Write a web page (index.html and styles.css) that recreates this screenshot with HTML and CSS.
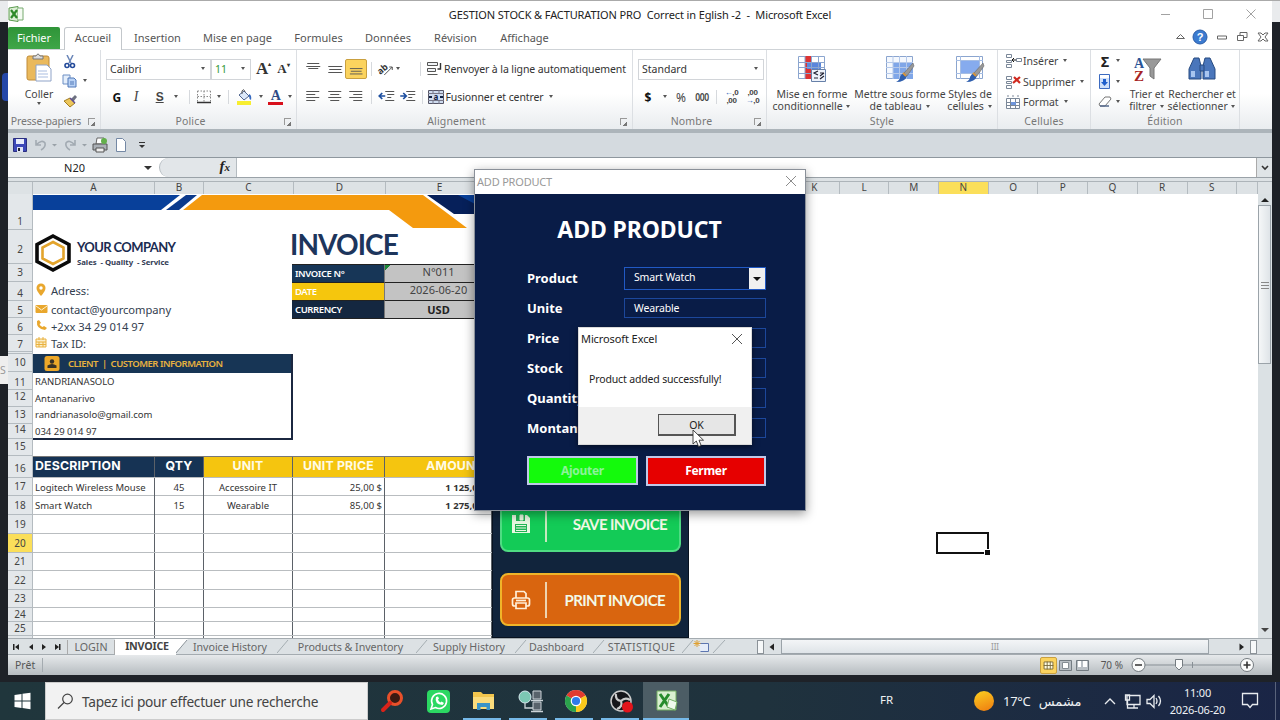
FILE: index.html
```
<!DOCTYPE html>
<html lang="fr">
<head>
    <meta charset="UTF-8">
    <title>GESTION STOCK &amp; FACTURATION PRO</title>
    <link rel="stylesheet" href="styles.css">
</head>
<body>
<div class="desktop">
    <div class="behind-top"></div>
    <div class="behind-blue"></div>
    <div class="behind-s">S</div>

    <!-- excel window -->
    <div class="excel">
        <div class="titlebar">
            <svg class="xl-logo" width="16" height="16" viewBox="0 0 16 16"><path d="M1 2l9-1.500v15L1 14z" fill="#dff0d8" stroke="#5a9a4e"/><path d="M10 2h5v12h-5" fill="#f4faf2" stroke="#77aa6e"/><path d="M3 4l6 8M9 4l-6 8" stroke="#2f8a2a" stroke-width="2.200"/></svg>
            <span class="title">GESTION STOCK &amp; FACTURATION PRO&nbsp; Correct in Eglish -2&nbsp; -&nbsp; Microsoft Excel</span>
            <svg class="win-btns" width="104" height="14" viewBox="0 0 104 14" fill="none" stroke="#a2a2a2"><path d="M5 7.500h9M47.500 2.500h9v9h-9zM90.500 2.500l9 9M99.500 2.500l-9 9"/></svg>
        </div>

        <div class="tabs">
            <span class="tab-file">Fichier</span>
            <span class="tab-active">Accueil</span>
            <span class="tab t1">Insertion</span>
            <span class="tab t2">Mise en page</span>
            <span class="tab t3">Formules</span>
            <span class="tab t4">Données</span>
            <span class="tab t5">Révision</span>
            <span class="tab t6">Affichage</span>
            <svg class="mdi" width="98" height="18" viewBox="0 0 98 18" fill="none" stroke="#666">
                <path d="M4.500 10.500l4-4 4 4zM45.500 8h9v3h-9zM65.500 7.500h6v5h-6zM68 7V4.500h7v5h-3M86 5h3l2 2 2-2h3l-3 4 3 4h-3l-2-2-2 2h-3l3-4z"/>
                <circle cx="28" cy="9" r="7" fill="#3b7bd0" stroke="#2a5da8"/>
                <text x="28" y="13" text-anchor="middle" font-size="11" font-weight="bold" fill="#fff" stroke="none">?</text>
            </svg>
        </div>

        <div class="ribbon">
            <div class="group g-clip">
                <div class="clip">
                    <div class="big paste">
                        <svg width="30" height="30" viewBox="0 0 30 30"><rect x="3" y="3" width="22" height="24" rx="2" fill="#eab95c" stroke="#c08c3a"/><path d="M9 5V3h3q2-4 4 0h3v3H9z" fill="#ddd" stroke="#777"/><path d="M12 12h11l4 4v12H12z" fill="#fff" stroke="#8fa3c8"/><path d="M14 18h9M14 21h10M14 24h10" stroke="#a9bde0"/></svg>
                        <span>Coller</span><i class="caret"></i>
                    </div>
                    <div class="clip-small">
                        <svg width="16" height="14" viewBox="0 0 16 14" fill="none"><path d="M5 0l4 8M11 0L7 8" stroke="#6a86b8" stroke-width="1.500"/><circle cx="5" cy="10.500" r="2" stroke="#234a9a" stroke-width="1.600"/><circle cx="10.500" cy="10.500" r="2" stroke="#234a9a" stroke-width="1.600"/></svg>
                        <span class="line"><svg width="16" height="14" viewBox="0 0 16 14"><path d="M1 1h7v9H1z" fill="#e4eefb" stroke="#6d8fc4"/><path d="M6 4h6l2 2v7H6z" fill="#b9d2f5" stroke="#5078b8"/><path d="M8 8h4M8 10h4" stroke="#5078b8"/></svg><i class="caret"></i></span>
                        <svg width="16" height="14" viewBox="0 0 16 14"><path d="M9 5l4-4 2 2-4 5z" fill="#6c7080"/><path d="M2 7l6-3 5 5-5 4z" fill="#ecc65a" stroke="#a37d22"/><path d="M8 4l5 5" stroke="#5b4b92" stroke-width="1.500"/></svg>
                    </div>
                </div>
                <div class="cap"><span>Presse-papiers</span><i class="launch"></i></div>
            </div>

            <div class="group g-font">
                <div class="row1">
                    <span class="combo c-font"><em>Calibri</em><i class="caret"></i></span>
                    <span class="combo c-size"><em>11</em><i class="caret"></i></span>
                    <span class="serif big-a">A<sup>▴</sup></span>
                    <span class="serif small-a">A<sup>▾</sup></span>
                </div>
                <div class="row2">
                    <b class="w20">G</b><span class="w20 ital">I</span><span class="w22 under">S</span><i class="caret"></i><i class="sep"></i>
                    <svg class="ic-border" width="16" height="14" viewBox="0 0 16 14"><path d="M1.500 1h13M1.500 6.500h13M1.500 1v11M8 1v11M14.500 1v11" fill="none" stroke="#888" stroke-dasharray="1.500 1.500"/><path d="M1 12.500h14" stroke="#333" stroke-width="1.500"/></svg>
                    <i class="caret"></i><i class="sep sep2"></i>
                    <svg class="ic-fill" width="18" height="16" viewBox="0 0 18 16"><path d="M3 6l5-4 5 5-5 4z" fill="#dce8f8" stroke="#50658f"/><path d="M6 5V2q2-3 3 1" fill="none" stroke="#555"/><path d="M13 5q3 1 2 6-2-1-2-4" fill="#3468c0"/><path d="M1 12h14v4H1z" fill="#f8ee30"/></svg>
                    <i class="caret"></i>
                    <span class="font-color">A</span><i class="caret"></i>
                </div>
                <div class="cap"><span>Police</span><i class="launch"></i></div>
            </div>

            <div class="group g-align">
                <div class="row1">
                    <svg class="al" viewBox="0 0 21 20"><path d="M5 4.500h12M4 7.500h14M6 9.500h10"/></svg>
                    <svg class="al" viewBox="0 0 21 20"><path d="M4 7.500h14M5 10.500h12M4 13.500h14"/></svg>
                    <svg class="al on" viewBox="0 0 21 20"><path d="M4 9.500h14M5 12.500h12M4 15.500h14"/></svg>
                    <i class="sep"></i>
                    <svg class="al" viewBox="0 0 21 20"><text x="1" y="12" font-size="9" font-weight="bold" fill="#333" stroke="none" transform="rotate(-40 8 10)">ab</text><path d="M8 16l8-8M13 8h3v3"/></svg><i class="caret c-or"></i>
                    <i class="sep sep-wrap"></i>
                    <svg width="16" height="16" viewBox="0 0 16 16" fill="#f0f3f6" stroke="#555"><path d="M1.500 1.500h10v3h-10zM1.500 7.500h8v3h-8zM1.500 13.500h10"/><path d="M14.500 2v6h-3" fill="none" stroke="#333" stroke-width="1.400"/></svg>
                    <span class="txt wrap-t">Renvoyer à la ligne automatiquement</span>
                </div>
                <div class="row2">
                    <svg class="al" viewBox="0 0 21 20"><path d="M4 4.500h13M4 7.500h9M4 10.500h13M4 13.500h9"/></svg>
                    <svg class="al" viewBox="0 0 21 20"><path d="M4 4.500h13M6 7.500h9M4 10.500h13M6 13.500h9"/></svg>
                    <svg class="al" viewBox="0 0 21 20"><path d="M4 4.500h13M8 7.500h9M4 10.500h13M8 13.500h9"/></svg>
                    <i class="sep"></i>
                    <svg class="al" viewBox="0 0 21 20"><path d="M9 4.500h9M11 7.500h7M11 10.500h4M9 13.500h9"/><path d="M3 9h6M6 6L3 9l3 3" stroke="#1d4fa0" stroke-width="1.700"/></svg>
                    <svg class="al" viewBox="0 0 21 20"><path d="M9 4.500h9M11 7.500h7M11 10.500h4M9 13.500h9"/><path d="M3 9h6M6 6l3 3-3 3" stroke="#1d4fa0" stroke-width="1.700"/></svg>
                    <i class="sep sep-m"></i>
                    <svg width="16" height="14" viewBox="0 0 16 14"><path d="M.5.5h15v13H.5z" fill="#cfdcf0" stroke="#556"/><path d="M0 3.500h16M0 10.500h16M5 0v3M11 0v3M5 11v3M11 11v3" stroke="#778"/><path d="M1 7h3M12 7h3" stroke="#124" stroke-width="2"/><text x="8" y="10" text-anchor="middle" font-size="8" font-weight="bold" fill="#124">a</text></svg>
                    <span class="txt merge-t">Fusionner et centrer</span><i class="caret"></i>
                </div>
                <div class="cap"><span>Alignement</span><i class="launch"></i></div>
            </div>

            <div class="group g-num">
                <div class="row1"><span class="combo c-num"><em>Standard</em><i class="caret"></i></span></div>
                <div class="row2">
                    <b class="w20">$</b><i class="caret"></i><span class="w20 pct">%</span><span class="w22 zeros">000</span><i class="sep"></i>
                    <span class="dec"><span><u>←</u>,0</span><span>,00</span></span>
                    <span class="dec"><span>,00</span><span><u>→</u>,0</span></span>
                </div>
                <div class="cap"><span>Nombre</span><i class="launch"></i></div>
            </div>

            <div class="group g-style">
                <div class="bigs">
                    <div class="big b90">
                        <svg width="30" height="28" viewBox="0 0 30 28"><path d="M1.500 1.500h26v22h-26z" fill="#fff" stroke="#8ba5cf"/><path d="M8 1h6v23H8z" fill="#d33"/><path d="M10 8h14v6H10z" fill="#5a86dc"/><path d="M1 7.500h27M1 12.500h27M1 18.500h27M8 1v23M14.500 1v23M21.500 1v23" stroke="#8ba5cf"/><path d="M14.500 14.500h14v12h-14z" fill="#eef3fb" stroke="#6680a8"/><path d="M21 16l-4 2 4 2M17 23h4M23 18h4M23 21l4-3M23 24l4-3" fill="none" stroke="#223" stroke-width="1.200"/></svg>
                        <span>Mise en forme</span><span>conditionnelle <i class="caret"></i></span>
                    </div>
                    <div class="big b86">
                        <svg width="30" height="28" viewBox="0 0 30 28"><path d="M1.500 1.500h26v22h-26z" fill="#f4f8fe" stroke="#8ba5cf"/><path d="M8 7h20v17H8z" fill="#7fa6e8"/><path d="M1 7.500h27M1 12.500h27M1 18.500h27M8 1v23M14.500 1v23M21.500 1v23" stroke="#b5c9ea"/><path d="M28 8l-9 10 3 3 7-10z" fill="#999" stroke="#666" stroke-width=".6"/><path d="M19 18l3 3q-2 6-11 6 4-2 4-5 1-3 4-4z" fill="#2f5fae"/><path d="M18 18l3 3" stroke="#d8973c" stroke-width="2"/></svg>
                        <span>Mettre sous forme</span><span>de tableau <i class="caret"></i></span>
                    </div>
                    <div class="big b54">
                        <svg width="30" height="28" viewBox="0 0 30 28"><path d="M1.500 1.500h26v22h-26z" fill="#fff" stroke="#8ba5cf"/><path d="M6 6h18v12H6z" fill="#86abee"/><path d="M1 5.500h27M1 18.500h27M5.500 1v23M24.500 1v23" stroke="#a5bde4"/><path d="M28 8l-9 10 3 3 7-10z" fill="#999" stroke="#666" stroke-width=".6"/><path d="M19 18l3 3q-2 6-11 6 4-2 4-5 1-3 4-4z" fill="#2f5fae"/><path d="M18 18l3 3" stroke="#d8973c" stroke-width="2"/></svg>
                        <span>Styles de</span><span>cellules <i class="caret"></i></span>
                    </div>
                </div>
                <div class="cap"><span>Style</span></div>
            </div>

            <div class="group g-cells">
                <div class="stack">
                    <div class="line"><svg width="17" height="14" viewBox="0 0 17 14" fill="#fff" stroke="#7a8798"><path d="M1.500.5h5v3h-5zM1.500 6.500h5v2h-5zM1.500 10.500h5v3h-5zM11.500 4.500h5v3h-5z"/><path d="M11 6H7M9 4L7 6l2 2" stroke="#111" fill="none"/></svg><span>Insérer</span><i class="caret"></i></div>
                    <div class="line"><svg width="17" height="14" viewBox="0 0 17 14" fill="#fff" stroke="#7a8798"><path d="M1.500 1.500h5v3h-5zM1.500 6.500h5v2h-5zM1.500 10.500h5v3h-5z"/><path d="M9 2l6 6M15 2L8 8" stroke="#d02a20" stroke-width="2.200"/></svg><span>Supprimer</span><i class="caret"></i></div>
                    <div class="line"><svg width="17" height="14" viewBox="0 0 17 14" fill="#fff" stroke="#7a8798"><path d="M1.500 3.500h13v10h-13zM1 7.500h14M1 10.500h14M5.500 3v11M10.500 3v11M3 0v2M8 0v2M13 0v2"/><path d="M6 7h5v3H6z" fill="#6f96dc" stroke="none"/></svg><span>Format</span><i class="caret"></i></div>
                </div>
                <div class="cap"><span>Cellules</span></div>
            </div>

            <div class="group g-edit">
                <div class="bigs">
                    <div class="stack">
                        <div class="line"><b class="sigma">Σ</b><i class="caret"></i></div>
                        <div class="line"><svg width="16" height="15" viewBox="0 0 16 15"><path d="M2.500.5h10v14h-10z" fill="#cfe0fa" stroke="#3c6bc0"/><path d="M3 1h9v3H3z" fill="#fff"/><path d="M6 5h3v3h2l-3.500 4L4 8h2z" fill="#1f5fcc"/></svg><i class="caret"></i></div>
                        <div class="line"><svg width="16" height="14" viewBox="0 0 16 14"><path d="M2 9l6-7h5l1 2-6 7H3z" fill="#fff" stroke="#777"/><path d="M3 11h9" stroke="#55688c" stroke-width="1.500"/></svg><i class="caret"></i></div>
                    </div>
                    <div class="big b44">
                        <svg width="30" height="28" viewBox="0 0 30 28"><path d="M11 4h18l-7 9v11l-4-3v-8z" fill="#999" stroke="#777"/><text x="2" y="13" font-size="14" font-weight="bold" font-family="Liberation Serif" fill="#2b5597">A</text><text x="2" y="26" font-size="15" font-weight="bold" font-family="Liberation Serif" fill="#a82424">Z</text></svg>
                        <span>Trier et</span><span>filtrer <i class="caret"></i></span>
                    </div>
                    <div class="big b66">
                        <svg width="30" height="28" viewBox="0 0 30 28" fill="#4a76bb" stroke="#274a80"><path d="M7 3h5l2 8v13H2V14z"/><path d="M18 3h5l5 11v10H16V11z"/><path d="M13 10h4v6h-4z"/><path d="M4 16h4v6H4zM18 16h4v6h-4z" fill="#a8c5ef" stroke="none"/></svg>
                        <span>Rechercher et</span><span>sélectionner <i class="caret"></i></span>
                    </div>
                </div>
                <div class="cap"><span>Édition</span></div>
            </div>
        </div>

        <!-- quick access -->
        <div class="qat">
            <svg width="14" height="14" viewBox="0 0 14 14"><path d="M.5.5h13v13H.5z" fill="#3d48b8" stroke="#2b2f80"/><path d="M3 1h8v5H3z" fill="#e8ecfb"/><path d="M4 9h6v5H4z" fill="#dfe3f5"/><path d="M5 10h2v3H5z" fill="#223"/></svg>
            <svg width="26" height="12" viewBox="0 0 26 12" fill="none" stroke="#a2aab2" stroke-width="1.600"><path d="M2 1v5h5M2 6q6-6 9-2 1 4-4 7"/><path d="M18 5h5l-2.500 2.500z" fill="#99a1a8" stroke="none"/></svg>
            <svg width="26" height="12" viewBox="0 0 26 12" fill="none" stroke="#a2aab2" stroke-width="1.600"><path d="M11 1v5H6M11 6Q5 0 2 4q-1 4 4 7"/><path d="M18 5h5l-2.500 2.500z" fill="#99a1a8" stroke="none"/></svg>
            <svg width="16" height="16" viewBox="0 0 16 16"><path d="M4 7l1-6h7l1 6z" fill="#fff" stroke="#666"/><path d="M1 7h14v6H1z" fill="#aab0b6" stroke="#555"/><path d="M4 11h8v4H4z" fill="#eee" stroke="#555"/><circle cx="12" cy="4" r="3" fill="#63b04b"/></svg>
            <svg width="12" height="14" viewBox="0 0 12 14"><path d="M1.500.5h6l3 3v10h-9z" fill="#fff" stroke="#7488a4"/></svg>
            <svg width="8" height="8" viewBox="0 0 8 8"><path d="M1 1.500h6" stroke="#333"/><path d="M1 4h6L4 7z" fill="#333"/></svg>
        </div>

        <div class="formula">
            <span class="name-box">N20</span><i class="caret dark"></i>
            <span class="fx-zone"><em>f<small>x</small></em></span>
            <span class="fx-input"></span>
            <span class="fx-more"><svg width="8" height="6" viewBox="0 0 8 6"><path d="M1 1l3 3 3-3" fill="none" stroke="#333" stroke-width="1.600"/></svg></span>
        </div>

        <div class="sheet">
            <div class="cols">
                <span class="corner"></span>
                <span class="cA">A</span><span class="cB">B</span><span class="cC">C</span><span class="cD">D</span><span class="cE">E</span><span class="cF"></span>
                <span>K</span><span>L</span><span>M</span><span class="sel">N</span><span>O</span><span>P</span><span>Q</span><span>R</span><span>S</span><span class="last"></span>
            </div>
            <div class="body">
                <div class="rows">
                    <span class="r1">1</span><span class="r2">2</span><span class="r3">3</span><span class="r4">4</span><span class="r5">5</span><span class="r6">6</span><span class="r7">7</span><span class="r8"></span>
                    <span class="r10">10</span><span class="r11">11</span><span class="r12">12</span><span class="r13">13</span><span class="r14">14</span><span class="r15">15</span><span class="r16">16</span>
                    <span>17</span><span>18</span><span>19</span><span class="sel">20</span><span>21</span><span>22</span><span class="r23">23</span><span class="r24">24</span><span class="r25">25</span>
                </div>

                <div class="invoice">
                    <svg class="banner" width="459" height="36" viewBox="0 0 459 36">
                        <path d="M0 1h147L128 16H0z" fill="#08409a"/><path d="M153 1h11l-18 15h-13z" fill="#0b3a8c"/>
                        <path d="M169 1h221l44 33h-54L356 16H150z" fill="#f49a0e"/><path d="M394 1h65v19h-38z" fill="#06205a"/><path d="M425 1h34v18z" fill="#08409a"/>
                    </svg>
                    <div class="head">
                        <div class="company">
                            <div class="brand">
                                <svg width="38" height="40" viewBox="0 0 38 40" fill="none"><path d="M19 3l16 8.500v17L19 37 3 28.500v-17z" stroke="#0a0a0a" stroke-width="3.600"/><path d="M19 9l10.500 5.500v11L19 31 8.500 25.500v-11z" stroke="#e3a42c" stroke-width="2.600"/></svg>
                                <div><strong>YOUR COMPANY</strong><small>Sales&nbsp; - Quality&nbsp; - Service</small></div>
                            </div>
                            <p class="p1"><svg width="14" height="14" viewBox="0 0 14 14"><path d="M7 13Q2.500 8 2.500 5a4.500 4.500 0 019 0q0 3-4.500 8z" fill="#e9a72d"/><circle cx="7" cy="5" r="1.700" fill="#fff"/></svg>Adress:</p>
                            <p class="p2"><svg width="14" height="14" viewBox="0 0 14 14"><rect x="1.500" y="2" width="12" height="8" rx="1" fill="#e9a72d"/><path d="M2 3l5.500 4L13 3" fill="none" stroke="#fff3cf"/></svg>contact@yourcompany</p>
                            <p class="p3"><svg width="14" height="14" viewBox="0 0 14 14"><path d="M3 2q-1 8 8 9l2-2-3-2-1.500 1Q6 7 5.500 5L7 4 5 1z" fill="#e9a72d"/></svg>+2xx 34 29 014 97</p>
                            <p class="p4"><svg width="14" height="14" viewBox="0 0 14 14"><path d="M2 3h10v8H2zM2 6h10M5 1v3M9 1v3M5 6v5M9 6v5M2 8.500h10" fill="#fbeec8" stroke="#e9b13e"/></svg>Tax ID:</p>
                        </div>
                        <div class="meta">
                            <h1>INVOICE</h1>
                            <div class="meta-grid">
                                <b class="m1">INVOICE N°</b><span class="m1v">N°011</span>
                                <b class="m2">DATE</b><span>2026-06-20</span>
                                <b class="m3">CURRENCY</b><span class="usd">USD</span>
                            </div>
                        </div>
                    </div>
                    <div class="client">
                        <div class="client-head"><svg width="16" height="15" viewBox="0 0 16 15"><rect x=".5" width="15" height="15" rx="2.500" fill="#eda829"/><circle cx="8" cy="5.500" r="2.200" fill="#3a3226"/><path d="M3.500 12V9.500Q8 6.500 12.500 9.500V12z" fill="#3a3226"/></svg><span>CLIENT&nbsp; |&nbsp; CUSTOMER INFORMATION</span></div>
                        <p>RANDRIANASOLO</p><p>Antananarivo</p><p>randrianasolo@gmail.com</p><p>034 29 014 97</p>
                    </div>
                    <div class="lines">
                        <div class="tr th"><b class="navy left">DESCRIPTION</b><b class="navy">QTY</b><b>UNIT</b><b>UNIT PRICE</b><b class="right">AMOUNT</b></div>
                        <div class="tr"><span class="left">Logitech Wireless Mouse</span><span>45</span><span>Accessoire IT</span><span class="right">25,00 $</span><span class="right total">1 125,00 $</span></div>
                        <div class="tr"><span class="left">Smart Watch</span><span>15</span><span>Wearable</span><span class="right">85,00 $</span><span class="right total">1 275,00 $</span></div>
                        <div class="tr"><span></span><span></span><span></span><span></span><span></span></div>
                        <div class="tr"><span></span><span></span><span></span><span></span><span></span></div>
                        <div class="tr"><span></span><span></span><span></span><span></span><span></span></div>
                        <div class="tr"><span></span><span></span><span></span><span></span><span></span></div>
                        <div class="tr h23"><span></span><span></span><span></span><span></span><span></span></div>
                        <div class="tr h24"><span></span><span></span><span></span><span></span><span></span></div>
                        <div class="tr h24"><span></span><span></span><span></span><span></span><span></span></div>
                        <div class="tr h26"><span></span><span></span><span></span><span></span><span></span></div>
                    </div>
                </div>

                <div class="actions">
                    <div class="act save"><svg width="20" height="20" viewBox="0 0 20 20"><path d="M1 1h15l3 3v15H1z" fill="#e8f8e2"/><path d="M5 1h9v6H5zM4 10h12v8H4z" fill="#22b455"/><path d="M9 1h3v5H9zM5 11.500h10M5 14h10M5 16.500h10" fill="#e8f8e2" stroke="#e8f8e2"/></svg><i></i><span>SAVE INVOICE</span></div>
                    <div class="act print"><svg width="20" height="20" viewBox="0 0 20 20" fill="none" stroke="#fff0d8" stroke-width="1.700"><path d="M5 8V1.500h8l2 2V8"/><rect x="1.500" y="8" width="17" height="8" rx="2"/><path d="M5 13h10v5.500H5z" fill="#d9650f"/><path d="M5 10.500h10"/></svg><i></i><span>PRINT INVOICE</span></div>
                </div>
                <div class="empty"><div class="cursor-cell"></div></div>

                <div class="vscroll"><i class="up"></i><div class="vthumb"></div><i class="down"></i></div>
            </div>
        </div>

        <div class="sheet-tabs">
            <svg class="nav" width="59" height="16" viewBox="0 0 59 16" fill="#222"><path d="M5 5h1.500v6H5zM11 5v6L7 8zM25 5v6l-4-3zM34 5v6l4-3zM47 5v6l4-3zM51 5h1.500v6H51z"/></svg>
            <span class="st s1">LOGIN</span>
            <span class="st s2">INVOICE</span>
            <svg width="12" height="16" viewBox="0 0 12 16"><path d="M0 0h12L0 13z" fill="#fff"/><path d="M11 1L0 14" stroke="#8d959b"/></svg>
            <span class="st s3">Invoice History</span>
            <svg width="12" height="16" viewBox="0 0 12 16"><path d="M11 1L0 14" stroke="#a5adb2"/></svg>
            <span class="st s4">Products &amp; Inventory</span>
            <svg width="12" height="16" viewBox="0 0 12 16"><path d="M11 1L0 14" stroke="#a5adb2"/></svg>
            <span class="st s5">Supply History</span>
            <svg width="12" height="16" viewBox="0 0 12 16"><path d="M11 1L0 14" stroke="#a5adb2"/></svg>
            <span class="st s6">Dashboard</span>
            <svg width="12" height="16" viewBox="0 0 12 16"><path d="M11 1L0 14" stroke="#a5adb2"/></svg>
            <span class="st s7">STATISTIQUE</span>
            <svg class="new-tab" width="46" height="16" viewBox="0 0 46 16"><path d="M11 1L0 14M43 1L31 14" stroke="#a5adb2"/><path d="M16.500 4.500h10v8h-8" fill="#e5ecf8" stroke="#5d76b0"/><path d="M15 1v7M11.500 4.500h7M12.500 2l5 5M17.500 2l-5 5" stroke="#e0a030"/></svg>
            <i class="split"></i>
            <svg width="17" height="16" viewBox="0 0 17 16"><path d="M10 4.500v7L5.500 8z" fill="#222"/></svg>
            <div class="hthumb">III</div>
            <svg width="41" height="16" viewBox="0 0 41 16"><path d="M30.500 4.500v7L35 8z" fill="#222"/></svg>
            <i class="split"></i>
        </div>

        <div class="status">
            <span class="ready">Prêt</span>
            <div class="views">
                <svg class="on" width="17" height="17" viewBox="0 0 17 17"><path d="M3.500 4.500h10v8h-10zM3 8.500h11M7 4v9M10.500 4v9" fill="#fffbe0" stroke="#75663a"/></svg>
                <svg width="17" height="17" viewBox="0 0 17 17"><path d="M2.500 3.500h12v10h-12z" fill="#b9bfc4" stroke="#747c82"/><path d="M5.500 5.500h6v6h-6z" fill="#fff" stroke="#848c92"/></svg>
                <svg width="17" height="17" viewBox="0 0 17 17"><path d="M2.500 3.500h12v10h-12z" fill="#b9bfc4" stroke="#747c82"/><path d="M4 4h3v6H4zM9 4h4v6H9z" fill="#fff"/></svg>
            </div>
            <span class="zoom">70 %</span>
            <svg width="126" height="18" viewBox="0 0 126 18"><path d="M14 9h96" stroke="#878f95"/><path d="M62.500 6v6" stroke="#878f95"/><g fill="#fafbfb" stroke="#747b80"><circle cx="8.500" cy="9" r="6.500"/><circle cx="117" cy="9" r="6.500"/><path d="M45.500 3.500h7v7L49 14l-3.500-3.500z"/></g><path d="M5 9h7M113.500 9h7M117 5.500v7" stroke="#333" stroke-width="1.600"/></svg>
        </div>
    </div>

    <!-- userform -->
    <div class="form">
        <div class="form-title"><span>ADD PRODUCT</span><svg width="12" height="12" viewBox="0 0 12 12"><path d="M1 1l10 10M11 1L1 11" stroke="#8c8c8c"/></svg></div>
        <div class="form-body">
            <h2>ADD PRODUCT</h2>
            <div class="field"><label>Product</label><div class="inp sel">Smart Watch<b></b></div></div>
            <div class="field"><label>Unite</label><div class="inp">Wearable</div></div>
            <div class="field"><label>Price</label><div class="inp"></div></div>
            <div class="field"><label>Stock</label><div class="inp"></div></div>
            <div class="field"><label>Quantity</label><div class="inp"></div></div>
            <div class="field"><label>Montant</label><div class="inp"></div></div>
            <div class="btns"><span class="add">Ajouter</span><span class="close">Fermer</span></div>
        </div>
    </div>

    <div class="msgbox">
        <div class="msg-title"><span>Microsoft Excel</span><svg width="12" height="12" viewBox="0 0 12 12"><path d="M1 1l10 10M11 1L1 11" stroke="#555"/></svg></div>
        <div class="msg-text">Product added successfully!</div>
        <div class="msg-foot"><span>OK</span></div>
    </div>
    <svg class="pointer" width="13" height="19" viewBox="0 0 13 19"><path d="M1 1v14l3.300-3 2.200 5.500 2.600-1L7 11.200h4.500z" fill="#fff" stroke="#333" stroke-width=".9"/></svg>

    <div class="taskbar">
        <svg class="start" width="45" height="38" viewBox="0 0 45 38" fill="#fff"><path d="M14.500 13l7-1v6.500h-7zM22.500 11.800l8-1.100v7.800h-8zM14.500 19.500h7V26l-7-1zM22.500 19.500h8v7.700l-8-1.100z"/></svg>
        <div class="search"><svg width="17" height="17" viewBox="0 0 17 17"><circle cx="10.500" cy="6" r="4.800" fill="none" stroke="#444" stroke-width="1.200"/><path d="M7 9.500L1 15.500" stroke="#444" stroke-width="1.300"/></svg><span>Tapez ici pour effectuer une recherche</span></div>
        <div class="apps">
            <svg viewBox="0 0 46 38"><circle cx="28" cy="16" r="6.500" fill="#3b1a12" stroke="#e8502a" stroke-width="3"/><path d="M23 21l-7 7" stroke="#d8231a" stroke-width="4" stroke-linecap="round"/></svg>
            <svg viewBox="0 0 46 38"><rect x="14" y="8" width="23" height="23" rx="4" fill="#2bd862"/><path d="M18 27l1.500-4.500a7.500 7.500 0 113 3z" fill="none" stroke="#fff" stroke-width="1.600"/><path d="M23 15q-2 7 6.500 8l1.500-2-2.500-1.500-1 1q-2-1-2.500-3l1-1-1-2z" fill="#fff"/></svg>
            <svg class="run" viewBox="0 0 46 38"><path d="M14 10h8l2 2h11v15H14z" fill="#f3c64d"/><path d="M14 15h21v12H14z" fill="#fbdc7c"/><path d="M18 28v-7h13v7h-3.500v-3h-6v3z" fill="#3a94c8"/></svg>
            <svg class="run" viewBox="0 0 46 38"><circle cx="20" cy="15" r="6" fill="#7cc8b4" stroke="#d5e8ee"/><path d="M28 9h8v8h-8zM28 20h8v8h-8z" fill="#59636c" stroke="#ccd3d8"/><path d="M20 21v5h8M26 18.500h12M26 29.500h12" stroke="#ccd3d8" stroke-width="1.300" fill="none"/></svg>
            <svg class="run" viewBox="0 0 46 38"><g transform="translate(2)"><circle cx="23" cy="19" r="11" fill="#e0e0e0"/><path d="M23 19L13.470 13.500A11 11 0 0132.530 13.500z" fill="#e23b2e"/><path d="M23 19l9.530-5.500A11 11 0 0123 30z" fill="#fbc91b"/><path d="M23 19v11a11 11 0 01-9.530-16.500z" fill="#2ba24c"/><circle cx="23" cy="19" r="5.300" fill="#fff"/><circle cx="23" cy="19" r="4.100" fill="#2f7bea"/></g></svg>
            <svg class="run" viewBox="0 0 46 38"><g transform="translate(2)"><circle cx="22" cy="19" r="10" fill="#15161a" stroke="#ccc" stroke-width="1.500"/><path d="M22 19q-6-1-5-7M22 19q4-4 9-1M22 19q2 6-4 8" fill="none" stroke="#ccc" stroke-width="2.200"/><circle cx="28.500" cy="25" r="5.500" fill="#e3141b"/></g></svg>
            <svg class="run act-app" viewBox="0 0 46 38"><path d="M14 9h19v19H14z" fill="#d9efd0" stroke="#73ae63"/><path d="M17 12l9 13M26 12l-9 13" stroke="#278c2c" stroke-width="3"/><path d="M26 17l8 3-2 8-8-3z" fill="#f0f9ec" stroke="#73ae63"/></svg>
        </div>
        <span class="lang">FR</span>
        <i class="sun"></i>
        <span class="temp">17°C</span><span class="weather" dir="rtl">مشمس</span>
        <svg width="62" height="38" viewBox="0 0 62 38" fill="none" stroke="#e8ebef" stroke-width="1.300"><path d="M4 22l5-5 5 5M26 13.500h13v9H26zM30 26h7M33 23v3M24.500 13h4v5h-4zM26.500 18v8h4M46 17.500h3l4-4v12l-4-4h-3zM55 16q2 3 0 6M57.500 14q4 5 0 10"/></svg>
        <span class="clock"><span>11:00</span><span>2026-06-20</span></span>
        <svg class="notif" width="18" height="18" viewBox="0 0 18 18" fill="none" stroke="#e8ebef" stroke-width="1.300"><path d="M1.500 1.500h15v11h-5L9 15.500 6.500 12.500h-5z"/></svg>
        <i class="peek"></i>
    </div>
</div>
</body>
</html>
```
FILE: styles.css
```
*{margin: 0; padding: 0; box-sizing: border-box}
body{width: 1280px; height: 720px; overflow: hidden; font-family: "Noto Sans", "Open Sans", sans-serif; font-size: 10.5px; color: #444}
svg{display: block; flex: none}
i{font-style: normal; flex: none}
.desktop{position: relative; width: 1280px; height: 720px; padding: 1px 8px 0; background: #1e2228}

/* what peeks out behind the window */
.behind-top{position: absolute; left: 0; top: 0; width: 1280px; height: 22px; background: #e9ebed; border-top: 1px solid #aaa}
.behind-blue{position: absolute; left: 2px; top: 73px; width: 6px; height: 28px; background: #2447a8; border-radius: 4px 0 0 4px}
.behind-s{position: absolute; left: 0; top: 356px; width: 8px; height: 28px; background: #eee; color: #999; line-height: 28px}

.excel{position: relative; width: 1264px; height: 674px; background: #fff}
.titlebar{display: flex; align-items: center; height: 26px; font-size: 11px; color: #222}
.title{flex: 1; text-align: center; padding-left: 100px; letter-spacing: -.12px}
.win-btns{margin-right: 12px}

.tabs{display: flex; height: 23px; border-bottom: 1px solid #cfd3d7; line-height: 22px; font-size: 11px; color: #555; text-align: center}
.tab-file{width: 52px; background: linear-gradient(#2f9438, #3fa648); color: #fff; border-radius: 2px 2px 0 0}
.tab-active{width: 58px; height: 23px; margin-left: 4px; border: 1px solid #c3c7cb; border-bottom: 0; border-radius: 3px 3px 0 0; background: #fff; line-height: 20px}
.t1{width: 71px}
.t2{width: 89px}
.t3{width: 73px}
.t4{width: 66px}
.t5{width: 69px}
.t6{width: 69px}
.mdi{margin: 1px 2px 0 auto; font-family: "Liberation Sans", sans-serif}

/* ribbon */
.ribbon{display: flex; height: 83px; background: linear-gradient(#fff 55%, #e9ecef); border-bottom: 4px solid #acb4ba}
.group{display: flex; flex-direction: column; border-right: 1px solid #dcdfe3; letter-spacing: 0}
.g-clip{width: 93px}
.g-font{width: 196px}
.g-align{width: 336px}
.g-num{width: 134px}
.g-style{width: 231px}
.g-cells{width: 93px}
.g-edit{width: 149px}
.cap{display: flex; align-items: center; height: 16px; color: #777; margin-top: auto; white-space: nowrap; letter-spacing: .15px}
.cap span{flex: 1; text-align: center}
.g-clip .cap{letter-spacing: -.15px}
.launch{width: 16px; height: 7px}
.launch::before{content: ""; display: block; width: 6px; height: 6px; margin-left: 4px; border-left: 1px solid #999; border-top: 1px solid #999}
.launch::after{content: ""; display: block; width: 4px; height: 4px; margin: -3px 0 0 7px; background: linear-gradient(135deg, transparent 50%, #777 50%)}
.caret{display: inline-block; width: 14px; height: 4px}
.caret::before{content: ""; display: block; width: 0; margin: 0 auto; border: 2.5px solid transparent; border-top: 3px solid #555; border-bottom: 0}
.big .caret{width: 6px; vertical-align: 1px}
.dark::before{border-width: 4px 4px 0; border-top-color: #333}
.sep{width: 1px; height: 14px; background: #d6d9dd}
.row1, .row2{display: flex; align-items: center; flex: none; height: 26px; margin-top: 6px; padding-left: 5px}
.row2{margin-top: 2px}
.w20{width: 20px; text-align: center}
.w22{width: 22px; text-align: center}
.row2 b{color: #111; font-size: 12px}
.big{display: flex; flex-direction: column; align-items: center; line-height: 12px; white-space: nowrap}
.big svg{margin-bottom: 5px}
.bigs{display: flex; padding-top: 5px}
.b90{width: 90px}
.b86{width: 86px}
.b54{width: 54px}
.b44{width: 44px}
.b66{width: 66px}
.line{display: flex; align-items: center; height: 20.5px}

.clip{display: flex; padding-top: 3px}
.paste{width: 46px; margin-left: 8px}
.paste .caret{margin-top: 2px}
.clip-small{display: flex; flex-direction: column}
.clip-small > svg{margin: 2px 0}
.combo{display: flex; align-items: center; height: 21px; border: 1px solid #d2d5d9; background: #fff; color: #333}
.combo em{flex: 1; font-style: normal; padding-left: 3px}
.c-font{width: 105px}
.c-size{width: 40px; color: #393}
.c-num{width: 126px}
.serif{font-family: "Liberation Serif", serif; font-weight: bold; color: #333}
.serif sup{font-size: 6px; vertical-align: 8px; line-height: 0}
.big-a{font-size: 17px; margin-left: 5px}
.small-a{font-size: 13px; margin-left: 6px}
.small-a sup{vertical-align: 6px}
.ital{font: italic 14px "Liberation Serif", serif}
.under{font: bold 12px "Liberation Sans", sans-serif; text-decoration: underline}
.g-font .row2{padding-left: 6px}
.g-font .row2 .sep{margin-left: 7px}
.g-font .under{width: 24px; padding-left: 4px}
.ic-border{margin-left: 6px}
.g-font .row2 .sep2{margin-left: 3px}
.ic-fill{margin-left: 7px}
.font-color{width: 15px; margin-left: 1px; font: bold 14px/12px "Liberation Serif", serif; text-align: center; color: #2c4a86; border-bottom: 3px solid #d8101c}
.g-font .row2 .caret{width: 13px}
.al{width: 21.5px; height: 20px; fill: none; stroke: #555}
.on{background: #fbd35e; border: 1px solid #c9a040; border-radius: 2px}
.g-align .sep{margin: 0 4px}
.g-align .c-or{width: 8px; margin-left: -3px}
.g-align .sep-wrap{margin: 0 5px 0 18px}
.g-align .sep-m{margin: 0 5px 0 3px}
.txt{margin-left: 2px; white-space: nowrap; color: #333; letter-spacing: -.1px}
.pct{font-size: 12px}
.zeros{font-size: 10px; font-weight: 600; letter-spacing: -.4px; transform: scaleX(.85)}
.g-num .row2 .sep{margin: 0 4px 0 3px}
.g-num .row2 .caret{width: 13px}
.dec{display: flex; flex-direction: column; width: 21px; text-align: center; font: bold 8px/8px "Liberation Sans", sans-serif; color: #444; letter-spacing: -.4px}
.dec u{text-decoration: none; color: #2257b5}
.stack{display: flex; flex-direction: column; padding-top: 2px}
.g-cells .stack{padding: 1px 0 0 7px}
.g-cells .line span{margin-left: 1px}
.g-edit .stack{width: 34px; margin-top: -4px; padding: 0 0 0 6px}
.g-edit .stack svg, .sigma{width: 16px}
.sigma{font-size: 14px; text-align: center; color: #222}
.g-edit .stack .caret{width: 10px}
.g-edit .big{font-size: 10.4px}

.qat{display: flex; align-items: center; height: 25px; padding-left: 5px; gap: 7px; background: #d4dadf; border-bottom: 1px solid #8e979e}
.qat svg:nth-child(2){margin-right: -3px}
.qat svg:nth-child(3){margin-right: -5px}
.qat svg:last-child{margin-left: 4px}
.formula{display: flex; align-items: center; height: 20px; border-bottom: 1px solid #9aa2a8; background: #fff; color: #222}
.name-box{width: 133px; text-align: center; font-size: 11px}
.fx-zone{width: 78px; height: 19px; margin-left: 4px; padding-right: 6px; border: 1px solid #b4bbc0; border-width: 0 1px; border-radius: 10px 0 0 10px; background: #e2e6e9; text-align: right; font: italic bold 15px/17px "Liberation Serif", serif}
.fx-zone small{font-size: 11px}
.fx-input{flex: 1}
.fx-more{display: flex; align-items: center; justify-content: center; width: 16px; height: 19px; background: #dfe4e7; border-left: 1px solid #aaa}

/* sheet */
.sheet{height: 460px; padding-top: 3px; background: #dde2e5}
.cols{display: flex; height: 13px; border-top: 1px solid #adb4b9; color: #444; line-height: 11px; text-align: center; font-size: 10px}
.cols span{width: 49.7px; flex: none; border-right: 1px solid #b4bbc0}
.cols .corner{width: 25px}
.cols .cA{width: 122px}
.cols .cB{width: 49px}
.cols .cC{width: 90px}
.cols .cD{width: 92px}
.cols .cE{width: 108px}
.cols .cF{width: 296px}
.cols .last{width: 21px}
.cols .sel, .rows .sel{background: #fbdf5a}
.body{display: flex; height: 444px; background: #fff; overflow: hidden}
.rows{width: 25px; flex: none; background: #e3e7ea; border-right: 1px solid #b4bbc0; text-align: center; font-size: 10px}
.rows span{display: flex; align-items: flex-end; justify-content: center; height: 18.75px; border-bottom: 1px solid #b4bbc0; line-height: 17px}
.rows .r1{height: 36px; line-height: 15px}
.rows .r2{height: 34px; line-height: 28px}
.rows .r3{height: 18px}
.rows .r4{height: 19px; line-height: 14px}
.rows .r5{height: 16.5px; line-height: 13px}
.rows .r6{height: 17px; line-height: 14px}
.rows .r7{height: 17px; line-height: 14px}
.rows .r8{height: 2.5px}
.rows .r10, .rows .r11{height: 18px}
.rows .r11{line-height: 13px}
.rows .r12{height: 17px; line-height: 19px}
.rows .r13{height: 17px}
.rows .r14{height: 15px}
.rows .r15{height: 17px}
.rows .r16{height: 21.5px}
.rows .r23{height: 17.5px}
.rows .r24, .rows .r25{height: 14px; line-height: 13px}

.invoice{width: 459px; flex: none; color: #333}
.head{display: flex; height: 124px}
.company{width: 259px; font-size: 11.2px; color: #33404f}
.brand{display: flex; height: 49px; padding: 3px 0 0 1px}
.brand div{padding: 5px 0 0 5px}
.brand strong{display: block; font: bold 13px/18px Lato, sans-serif; color: #1b2c52; letter-spacing: -.6px}
.brand small{display: block; font: bold 7.8px/12px "Noto Sans", sans-serif; color: #333c55; letter-spacing: -.05px}
.company p{display: flex; align-items: center; height: 18px; white-space: nowrap; letter-spacing: -.05px}
.company p svg{margin-right: 3px; margin-left: 1px}
.company .p1{height: 22px}
.company .p2{height: 17px}
.company .p3{height: 16px}
.company .p4{height: 18px}
.meta{width: 200px}
.meta h1{height: 34px; margin-left: -2px; font: bold 28px/28px Lato, sans-serif; color: #1d355c; letter-spacing: -.9px}
.meta-grid{display: grid; grid-template-columns: 92px 108px; grid-template-rows: 18px 18px 18px; border-bottom: 1px solid #222}
.meta-grid b, .meta-grid span{border-top: 1px solid #222; padding-left: 3px; font-size: 9.5px; line-height: 17px; font-weight: 600; color: #fff}
.meta-grid b{letter-spacing: -.4px}
.meta-grid span{background: #c3c3c3; border-left: 1px solid #777; text-align: center; padding: 0; color: #444; font-size: 11px; line-height: 13px; font-weight: 400}
.meta-grid .m1{background: #173657}
.meta-grid .m1v{background: linear-gradient(135deg, #1d8a3a 4px, #c3c3c3 4px)}
.meta-grid .m2{background: #f5c60d}
.meta-grid .m3{background: #142740}
.meta-grid .usd{font-weight: bold; color: #222; line-height: 18px}
.client{width: 260px; height: 86px; border: 1px solid #1b2740; border-width: 0 2px 2px 0; font-size: 9.5px}
.client-head{display: flex; align-items: center; gap: 8px; height: 19px; padding-left: 11px; background: #173555; color: #e8b23f; font-weight: 600}
.client-head span{letter-spacing: -.5px}
.client p{height: 16.5px; line-height: 17px; padding-left: 2px}
.lines{margin-top: 16px}
.tr{display: grid; grid-template-columns: 122px 49px 89px 92px 107px; height: 18.75px; border-bottom: 1px solid #b9bdc0; font-size: 9.5px; line-height: 19px; text-align: center}
.tr span, .tr b{border-right: 1px solid #5b6168; white-space: nowrap}
.tr .left{text-align: left; padding-left: 2px}
.tr .right{text-align: right; padding-right: 2px}
.tr .total{font-weight: bold; padding-right: 0}
.th{height: 21.5px; font: 12.3px/18px Inter, sans-serif; color: #fffbe6; background: #f5c50f; border-top: 1px solid #777; letter-spacing: .2px}
.th b{font-weight: 700}
.th .navy{background: #163354; color: #fff}
.tr b.right{padding-right: 7px}
.h23{height: 17.5px}
.h24{height: 14px}
.h26{height: 5px}

.actions{width: 197px; flex: none; padding: 299px 9px 0 7px; background: #11243c; border: 1px solid #081220}
.act{display: flex; align-items: center; height: 58px; width: 181px; padding: 2px 0 0 9px; border-radius: 8px; border: 2px solid #4fdc83; background: #13cb57; color: #f2f9e6; font: bold 15px Lato, sans-serif; letter-spacing: -.6px}
.act i{width: 2px; height: 36px; margin-left: 14px; background: #f2f0d8; opacity: .8}
.act span{margin-left: auto; padding-right: 12px}
.act.print{height: 53px; margin-top: 21px; padding-top: 0; border-color: #f0b429; background: #d9650f}
.act.print span{padding-right: 14px}
.empty{position: relative; flex: 1}
.cursor-cell{position: absolute; left: 247px; top: 338px; width: 53px; height: 22px; border: 2px solid #111}
.cursor-cell::after{content: ""; position: absolute; right: -3px; bottom: -3px; width: 5px; height: 5px; background: #111; border: 1px solid #fff; border-width: 1px 0 0 1px}
.vscroll{display: flex; flex-direction: column; width: 14px; flex: none; background: #dbe1e4}
.up, .down{width: 0; margin: 4px auto 3px; border: 4px solid transparent; border-bottom-color: #222; border-top: 0}
.vthumb{height: 159px; margin-right: 1px; border: 1px solid #9ba3a9; background: linear-gradient(#888, #888) 50% 76px/8px 1px no-repeat, linear-gradient(#888, #888) 50% 79px/8px 1px no-repeat, linear-gradient(#888, #888) 50% 82px/8px 1px no-repeat, linear-gradient(90deg, #f5f7f8, #dfe4e8)}
.down{margin: auto auto 6px; border: 4px solid transparent; border-top-color: #444; border-bottom: 0}

.sheet-tabs{display: flex; align-items: center; height: 17px; background: #dce1e4; border-top: 1px solid #a4abb0; border-bottom: 1px solid #a4abb0; font-size: 10.7px; color: #666; white-space: nowrap; text-align: center}
.st{flex: none; letter-spacing: -.05px}
.s1{width: 48px; border-left: 1px solid #aaa; border-right: 1px solid #aaa}
.s2{width: 61px; height: 16px; padding-left: 3px; background: #fff; font-weight: bold; color: #444; letter-spacing: -.2px}
.s3{width: 89px; padding-right: 5px}
.s4{width: 127px; padding-right: 4px}
.s5{width: 87px; padding-right: 5px}
.s6{width: 66px; padding-right: 7px}
.s7{width: 77px; padding-right: 4px; letter-spacing: .3px}
.new-tab{margin-right: 29px}
.split{width: 7px; height: 14px; border: 1px solid #8b9298; background: #f6f8f9}
.hthumb{width: 428px; height: 15px; border: 1px solid #9ba3a9; background: linear-gradient(#f3f5f7, #dfe4e8); line-height: 13px; font-size: 8px; color: #999}

.status{display: flex; align-items: center; height: 20px; background: linear-gradient(#e6e9eb, #b6bcc0); color: #555}
.ready{width: 35px; padding-left: 7px; border-right: 1px solid #a4abb0}
.views{display: flex; margin-left: auto}
.zoom{margin: 0 7px 0 10px; font-size: 10px; white-space: nowrap}
.status > svg{margin-right: 16px}

/* add product */
.form{position: absolute; left: 474px; top: 169px; width: 332px; height: 342px; border: 1px solid #8a9099; background: #091c47; box-shadow: 0 3px 10px rgba(0, 0, 0, .4)}
.form-title{display: flex; align-items: center; justify-content: space-between; height: 24px; padding: 0 8px 2px 2px; background: #fff; color: #999; font-size: 11px}
.form-title span{letter-spacing: -.2px}
.form-body{padding: 20px 39px 0 52px; color: #fff}
.form-body h2{height: 49px; margin-left: -14px; text-align: center; font: bold 23px/31px "Noto Sans", sans-serif; letter-spacing: -.1px}
.field{display: flex; align-items: center; justify-content: space-between; height: 30px}
.field label{font-size: 13px; font-weight: bold; padding-bottom: 1px}
.inp{position: relative; width: 142px; height: 20px; padding-left: 9px; border: 1px solid #1c479b; font-size: 10.5px; line-height: 18px; letter-spacing: -.15px}
.inp.sel{height: 23px; line-height: 19px; border-color: #2159c4}
.inp b{position: absolute; right: 0; top: 0; width: 16px; height: 21px; background: #f0f0f0}
.inp b::after{content: ""; position: absolute; left: 4px; top: 9px; border: 4px solid transparent; border-top: 4px solid #111; border-bottom: 0}
.btns{display: flex; justify-content: space-between; margin-top: 13px; font-size: 12px; font-weight: bold; text-align: center; letter-spacing: -.3px}
.add, .close{width: 111px; height: 29px; border: 2px solid #bfc8e8; line-height: 25px}
.add{background: #14fa0c; color: #8cf39a}
.close{width: 120px; height: 30px; background: #e60000}

.msgbox{position: absolute; left: 578px; top: 327px; width: 174px; height: 118px; background: #fff; border: 1px solid #dadada; color: #222; box-shadow: 0 2px 6px rgba(0, 0, 0, .5)}
.msg-title{display: flex; align-items: center; justify-content: space-between; height: 22px; padding: 0 8px 1px 2px; font-size: 11px; letter-spacing: -.1px}
.msg-text{height: 57px; padding: 22px 0 0 10px; font-size: 10.5px; white-space: nowrap; letter-spacing: -.15px}
.msg-foot{height: 37px; padding: 7px 15px 0 0; background: #f0f0f0}
.msg-foot span{display: block; width: 78px; height: 22px; margin-left: auto; border: 1px solid #555; border-width: 1px 2px 2px 1px; background: #e6e6e6; text-align: center; line-height: 20px}
.pointer{position: absolute; left: 692px; top: 429px}

.taskbar{position: absolute; left: 0; top: 682px; display: flex; align-items: center; width: 1280px; height: 38px; background: linear-gradient(90deg, #20363c, #1f323d 60%, #1a2546); color: #eef1f4}
.search{display: flex; align-items: center; width: 323px; height: 38px; padding-left: 11px; background: #f2f2f2; border: 1px solid #ccc; color: #444; font-size: 13.7px; letter-spacing: -.25px}
.search span{margin-left: 8px}
.apps{display: flex; margin-left: -1px}
.apps svg{width: 46px; height: 38px}
.run{background: linear-gradient(#76b9e8, #76b9e8) 50% 100%/38px 2px no-repeat}
.apps .act-app{background: linear-gradient(#76b9e8, #76b9e8) 50% 100%/46px 2px no-repeat #4c5d65}
.lang{width: 20px; margin: -4px 0 0 191px; font-size: 11.5px}
.sun{width: 20px; height: 20px; margin-left: 74px; border-radius: 50%; background: linear-gradient(160deg, #fcd020, #ee7a10)}
.temp{margin-left: 9px; font-size: 13px; letter-spacing: -.3px}
.weather{width: 42px; margin-left: 9px; font: 13px "DejaVu Sans", sans-serif; white-space: nowrap}
.taskbar > .weather + svg{margin-left: 20px}
.clock{display: flex; flex-direction: column; width: 60px; margin-left: 4px; font-size: 11px; line-height: 17px; text-align: center; letter-spacing: -.2px}
.notif{margin-left: 14px}
.peek{width: 1px; height: 38px; margin-left: auto; margin-right: 4px; background: #59637b}
```
